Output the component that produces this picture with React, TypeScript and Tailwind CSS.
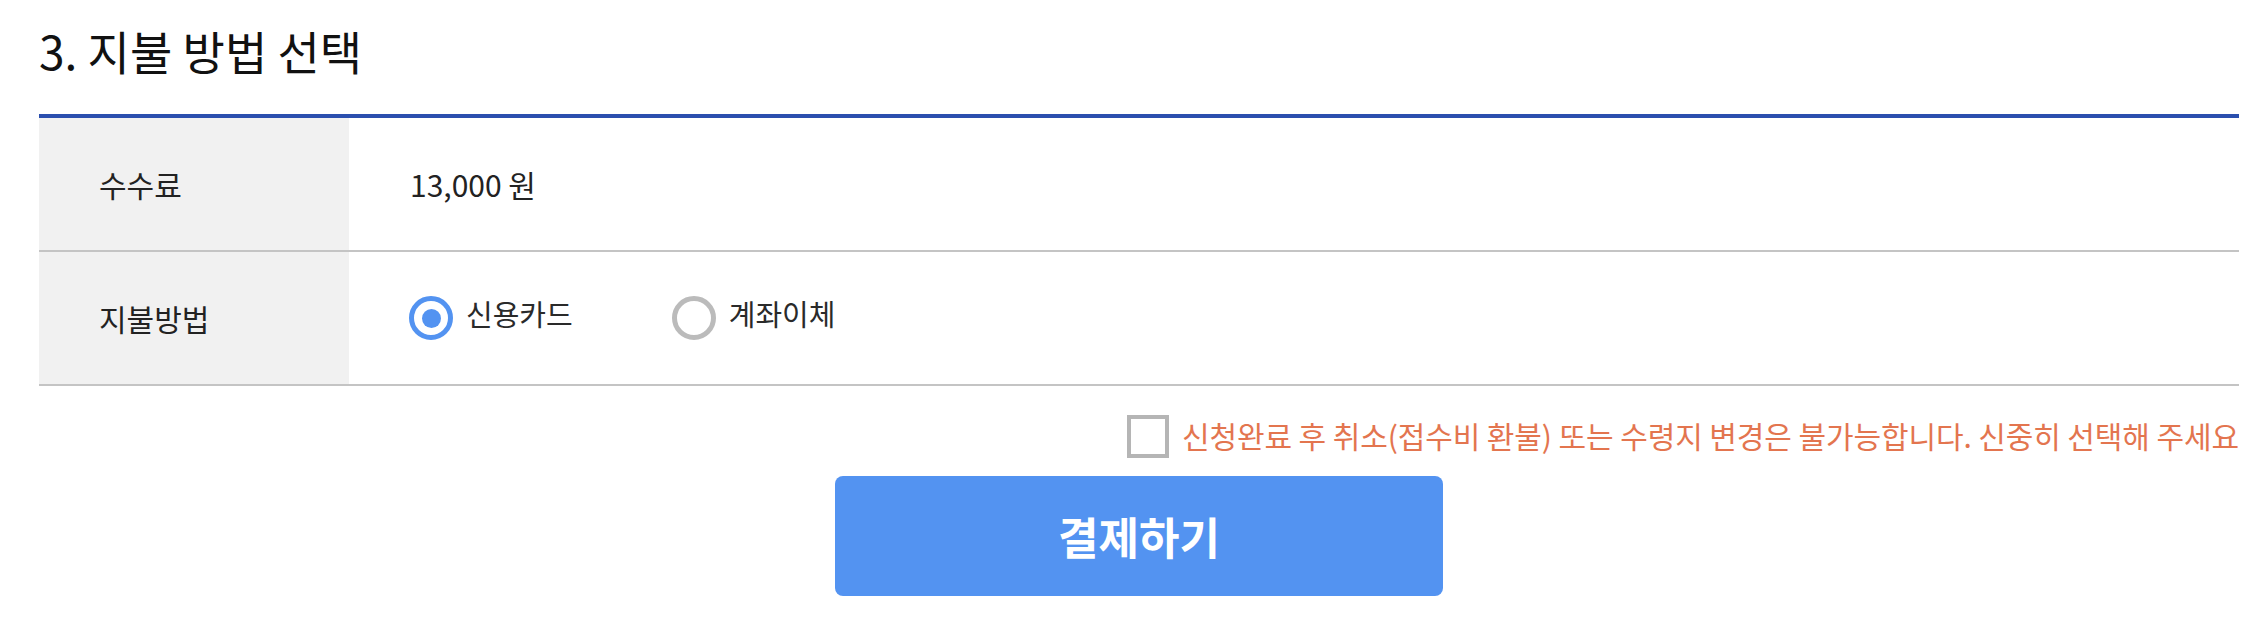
import { useState } from 'react';

type PayMethod = 'card' | 'transfer';

const FONT = "font-['Noto_Sans_CJK_KR',_'Noto_Sans',_sans-serif]";

const RadioOption = ({
  label,
  checked,
  onSelect,
}: {
  label: string;
  checked: boolean;
  onSelect: () => void;
}) => (
  <button type="button" onClick={onSelect} className="flex items-center gap-[13px]">
    <span
      className={`w-[44px] h-[44px] rounded-full border-[5px] flex items-center justify-center ${
        checked ? 'border-[#5393f1]' : 'border-[#bbbbbb]'
      }`}
    >
      {checked && <span className="w-[19px] h-[19px] rounded-full bg-[#5393f1]" />}
    </span>
    <span className="text-[29px] leading-none text-[#2a2a2a] -mt-[9px]">{label}</span>
  </button>
);

export default function App() {
  const [method, setMethod] = useState<PayMethod>('card');
  const [agreed, setAgreed] = useState(false);

  return (
    <div className={`w-[2258px] h-[634px] bg-white ${FONT}`}>
      <div className="ml-[39px] w-[2200px]">
        <div className="h-[100px] flex items-center">
          <h2 className="text-[46px] leading-none text-[#111] font-normal">3. 지불 방법 선택</h2>
        </div>

        <div className="mt-[14px] border-t-4 border-[#2b4fae]">
          <div className="flex h-[134px] border-b-2 border-[#c4c4c4]">
            <div className="w-[310px] bg-[#f1f1f1] pl-[60px] flex items-center">
              <span className="text-[30px] text-[#222]">수수료</span>
            </div>
            <div className="flex-1 pl-[61px] flex items-center">
              <span className="text-[30px] text-[#222]">13,000 원</span>
            </div>
          </div>

          <div className="flex h-[134px] border-b-2 border-[#c4c4c4]">
            <div className="w-[310px] bg-[#f1f1f1] pl-[60px] flex items-center">
              <span className="text-[30px] text-[#222]">지불방법</span>
            </div>
            <div className="flex-1 pl-[60px] flex items-center gap-[99px]">
              <RadioOption label="신용카드" checked={method === 'card'} onSelect={() => setMethod('card')} />
              <RadioOption
                label="계좌이체"
                checked={method === 'transfer'}
                onSelect={() => setMethod('transfer')}
              />
            </div>
          </div>
        </div>

        <div className="mt-[29px] flex justify-end items-center gap-[13px]">
          <button
            type="button"
            onClick={() => setAgreed(!agreed)}
            className="w-[42px] h-[43px] border-4 border-[#b5b5b5] bg-white"
          />
          <span className="text-[30px] leading-none text-[#e3754f] tracking-[-0.1px] -mt-[4px]">
            신청완료 후 취소(접수비 환불) 또는 수령지 변경은 불가능합니다. 신중히 선택해 주세요
          </span>
        </div>

        <div className="mt-[18px] flex justify-center">
          <button
            type="button"
            className="w-[608px] h-[120px] rounded-[8px] bg-[#5393f1] text-white text-[44px] font-bold"
          >
            결제하기
          </button>
        </div>
      </div>
    </div>
  );
}
